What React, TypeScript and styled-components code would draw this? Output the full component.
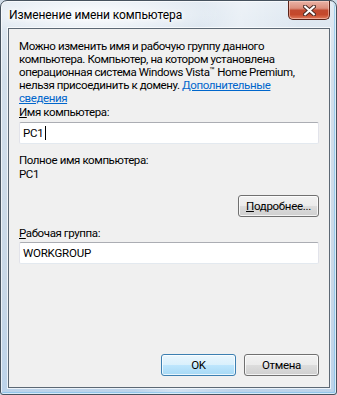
import React from 'react';
import styled, { createGlobalStyle } from 'styled-components';

// Page reset so the dialog fills the whole 337x395 viewport.
const GlobalStyle = createGlobalStyle`
  html, body {
    margin: 0;
    padding: 0;
    overflow: hidden;
    background: #cfdbe7;
  }
  body {
    font-family: Roboto, "Liberation Sans", Arial, sans-serif;
    font-size: 12px;
  }
`;

// Aero glass frame around the dialog.
const Window = styled.div`
  box-sizing: border-box;
  width: 337px;
  height: 395px;
  display: flex;
  flex-direction: column;
  border: 1px solid #46525e;
  border-radius: 7px 7px 3px 3px;
  background:
    radial-gradient(ellipse 130px 22px at 90px 14px, rgba(255,255,255,0.95), rgba(255,255,255,0) 100%),
    linear-gradient(100deg, rgba(255,255,255,0) 50%, rgba(255,255,255,0.35) 60%, rgba(255,255,255,0) 75%),
    linear-gradient(to bottom, #e3ebf3 0%, #d2dfeb 20%, #c9d8e7 70%, #bcd3ea 100%);
  box-shadow:
    inset 0 0 0 1px rgba(255,255,255,0.65),
    inset -1px -1px 0 1px rgba(120,190,235,0.6);
`;

const TitleBar = styled.div`
  height: 27px;
  display: flex;
  align-items: flex-start;
  justify-content: space-between;
  padding-left: 8px;
`;

const Title = styled.span`
  margin-top: 7px;
  font-size: 12px;
  letter-spacing: -0.1px;
  color: #000;
  text-shadow: 0 0 6px #fff, 0 0 3px #fff, 0 0 10px rgba(255,255,255,0.9);
`;

// Red close button of the caption bar.
const CloseButton = styled.div`
  box-sizing: border-box;
  width: 42px;
  height: 19px;
  margin-right: 6px;
  display: flex;
  align-items: center;
  justify-content: center;
  border: 1px solid #5a2217;
  border-top: none;
  border-radius: 0 0 5px 5px;
  background: linear-gradient(to bottom,
    #eab3a6 0%, #dc8f7d 40%, #c24a30 52%, #c5482b 75%, #e07a5c 100%);
  box-shadow: inset 0 0 0 1px rgba(255,220,210,0.5);
`;

// Light client area holding the controls.
const Client = styled.div`
  flex: 1;
  margin: 0 6px 6px 7px;
  display: flex;
  flex-direction: column;
  padding: 11px 10px 11px 10px;
  background: #f0f0f0;
  border: 1px solid #5c6874;
  box-shadow: 0 0 0 1px rgba(255,255,255,0.7);
`;

const Text = styled.div<{ $gap?: number }>`
  font-size: 11.5px;
  line-height: 13px;
  letter-spacing: -0.4px;
  color: #000;
  white-space: nowrap;
  margin-top: ${p => p.$gap ?? 0}px;
`;

const Link = styled.a`
  color: #0066cc;
  text-decoration: underline;
  cursor: pointer;
`;

const Key = styled.span`
  text-decoration: underline;
`;

const Tm = styled.sup`
  font-size: 8.5px;
  letter-spacing: 0;
  vertical-align: 3px;
  line-height: 0;
`;

const TextBox = styled.div<{ $gap?: number }>`
  box-sizing: border-box;
  height: 22px;
  margin-top: ${p => p.$gap ?? 0}px;
  display: flex;
  align-items: center;
  padding-left: 3px;
  background: #fff;
  border: 1px solid #e2e3ea;
  border-top-color: #abadb3;
  border-bottom-color: #e3e9ef;
  border-radius: 2px;
  font-size: 11.5px;
  letter-spacing: -0.2px;
  color: #000;
`;

const Caret = styled.span`
  display: inline-block;
  width: 1px;
  height: 14px;
  margin-left: 1px;
  background: #000;
`;

const ButtonRow = styled.div<{ $gap?: number }>`
  display: flex;
  justify-content: flex-end;
  gap: 8px;
  margin-top: ${p => p.$gap ?? 0}px;
`;

const Spacer = styled.div`
  flex: 1;
`;

// Vista-style push button; $primary gives the focused blue look.
const Button = styled.button<{ $primary?: boolean; $width?: number }>`
  box-sizing: border-box;
  width: ${p => p.$width ?? 75}px;
  height: 22px;
  padding: 0;
  font-family: Roboto, "Liberation Sans", Arial, sans-serif;
  font-size: 11.5px;
  letter-spacing: -0.3px;
  color: #000;
  border-radius: 3px;
  border: 1px solid ${p => (p.$primary ? '#3c7fb1' : '#707070')};
  background: ${p =>
    p.$primary
      ? 'linear-gradient(to bottom, #eaf6fd 0%, #d9f0fc 50%, #bee6fd 50%, #a7d9f5 100%)'
      : 'linear-gradient(to bottom, #f2f2f2 0%, #ebebeb 50%, #dddddd 50%, #cfcfcf 100%)'};
  box-shadow: inset 0 0 0 1px rgba(255,255,255,0.75);
`;

const App: React.FC = () => {
  return (
    <>
      <GlobalStyle />
      <Window>
        <TitleBar>
          <Title>Изменение имени компьютера</Title>
          <CloseButton>
            <svg width="13" height="11" viewBox="0 0 13 11">
              <path d="M2 1.5 L11 9.5 M11 1.5 L2 9.5" stroke="#4a2a24" strokeWidth="4" strokeLinecap="square" />
              <path d="M2.2 1.7 L10.8 9.3 M10.8 1.7 L2.2 9.3" stroke="#fff" strokeWidth="2.2" strokeLinecap="square" />
            </svg>
          </CloseButton>
        </TitleBar>
        <Client>
          <Text>
            Можно изменить имя и рабочую группу данного<br />
            компьютера. Компьютер, на котором установлена<br />
            операционная система Windows Vista<Tm>™</Tm> Home Premium,<br />
            нельзя присоединить к домену. <Link>Дополнительные<br />сведения</Link>
          </Text>
          <Text $gap={1}><Key>И</Key>мя компьютера:</Text>
          <TextBox $gap={3}>PC1<Caret /></TextBox>
          <Text $gap={10}>Полное имя компьютера:</Text>
          <Text $gap={1}>PC1</Text>
          <ButtonRow $gap={14}>
            <Button $width={81}><Key>П</Key>одробнее...</Button>
          </ButtonRow>
          <Text $gap={10}><Key>Р</Key>абочая группа:</Text>
          <TextBox $gap={2}>WORKGROUP</TextBox>
          <Spacer />
          <ButtonRow>
            <Button $primary>OK</Button>
            <Button>Отмена</Button>
          </ButtonRow>
        </Client>
      </Window>
    </>
  );
};

export default App;
